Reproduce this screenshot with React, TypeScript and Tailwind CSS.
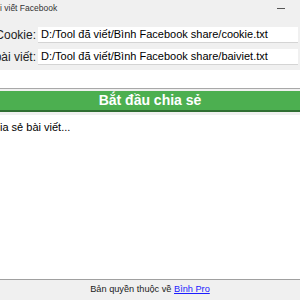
function PathRow({ label, value }: { label: string; value: string }) {
    return (
        <div className="flex items-center h-[16px]">
            <div className="w-[36px] flex justify-end overflow-hidden whitespace-nowrap text-[12px] text-[#222] flex-shrink-0">
                <span>{label}</span>
            </div>
            <div className="ml-[2px] flex-1 mr-[2px] h-[16px] bg-white border-b border-[#d4d4d4] flex items-center pl-[3px] text-[11px] text-black whitespace-nowrap overflow-hidden">
                {value}
            </div>
        </div>
    );
}

export default function App() {
    return (
        <div
            className="w-[300px] h-[300px] bg-[#f0f0f0] flex flex-col overflow-hidden"
            style={{ fontFamily: '"Liberation Sans", Arial, sans-serif' }}
        >
            <div className="h-[17px] flex items-center justify-between pr-[15px]">
                <div className="text-[8.5px] text-[#333] whitespace-nowrap">
                    i viết Facebook
                </div>
                <div className="w-[8px] h-px bg-[#555]"></div>
            </div>

            <div className="flex flex-col gap-[6px] mt-[10px]">
                <PathRow label="File Cookie:" value="D:/Tool đã viết/Bình Facebook share/cookie.txt" />
                <PathRow label="File bài viết:" value="D:/Tool đã viết/Bình Facebook share/baiviet.txt" />
            </div>

            <div className="mt-[5px] h-[19px] bg-white border-b border-[#a8a8a8]"></div>

            <button className="mt-[2px] h-[21px] bg-[#4caf50] border-b-2 border-[#2f6e32] text-white font-bold text-[14px] flex items-center justify-center">
                Bắt đầu chia sẻ
            </button>

            <div className="mt-[3px] flex-1 bg-white text-[11px] text-black pt-[4px] whitespace-nowrap">
                ia sẻ bài viết...
            </div>

            <div className="h-[21px] border-t border-[#a0a0a0] flex items-center justify-center text-[9.2px] text-[#222]">
                <span>Bản quyền thuộc về&nbsp;</span>
                <a href="#" className="text-[#1c1cff] underline">Bình Pro</a>
            </div>
        </div>
    );
}
